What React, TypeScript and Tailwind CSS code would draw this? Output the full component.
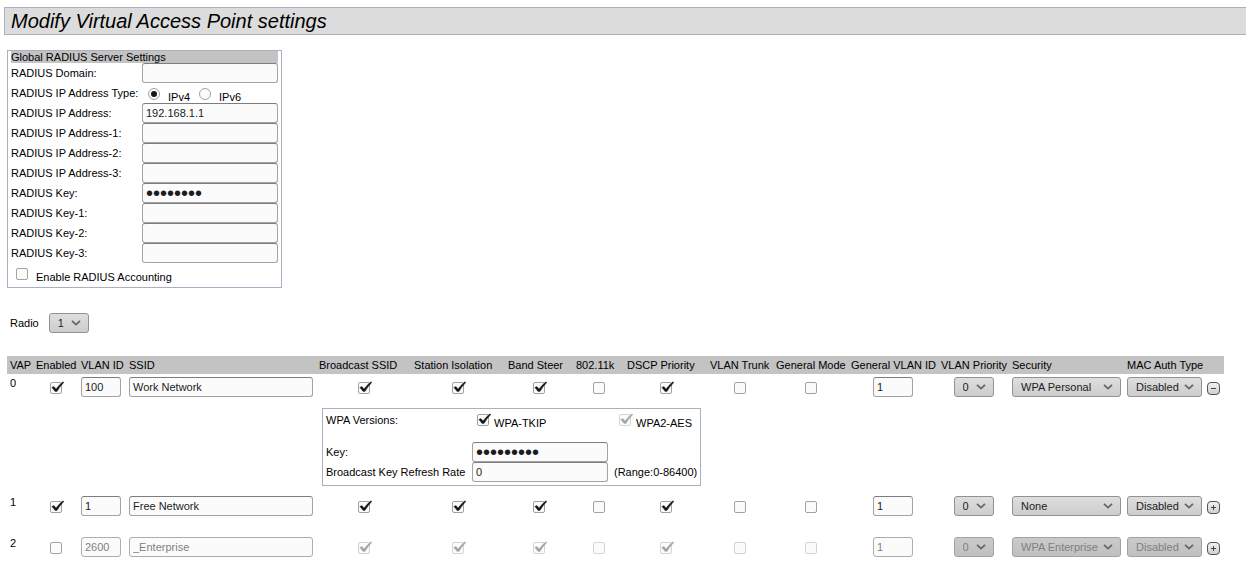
import { Fragment, useId, useState } from "react";
import type { InputHTMLAttributes, ReactNode } from "react";

const fieldClass =
  "block h-5 rounded-[3px] border border-[#a3a3a3] border-t-[#7d7d7d] bg-[#fbfbfb] px-[3px] leading-4 text-[#1c1c1c] outline-none disabled:border-[#adadad] disabled:text-[#808080]";

function TextField({ className = "", type = "text", ...rest }: InputHTMLAttributes<HTMLInputElement>) {
  const font = type === "password" ? "text-[20px]" : "text-[11px]";
  return <input type={type} className={`${fieldClass} ${font} ${className}`} {...rest} />;
}

function CheckBox(props: InputHTMLAttributes<HTMLInputElement>) {
  return (
    <span className="relative block size-3 shrink-0">
      <input
        type="checkbox"
        className="peer block size-3 appearance-none rounded-[2px] border border-[#a2a2a2] bg-[#fbfbfb] disabled:border-[#d4d4d4]"
        {...props}
      />
      <svg
        viewBox="0 0 14 13"
        className="pointer-events-none absolute -top-px left-0 hidden h-[13px] w-[14px] text-[#161616] peer-checked:block peer-disabled:text-[#a3a3a3]"
        aria-hidden="true"
      >
        <path d="M1.8 6.4 L4 5.6 L6 7.9 Q9 4 12.6 1 L14 1.3 Q10 5.4 7 10.4 L5 10.4 Q3.6 8.2 1.8 6.4 Z" fill="currentColor" stroke="currentColor" strokeWidth="0.4" />
      </svg>
    </span>
  );
}

function Select({
  label,
  value,
  options,
  width,
  disabled,
  id,
}: {
  label?: string;
  value: string;
  options: string[];
  width: string;
  disabled?: boolean;
  id?: string;
}) {
  return (
    <span className={`relative block ${width}`}>
      <select
        id={id}
        aria-label={label}
        defaultValue={value}
        disabled={disabled}
        className="block h-5 w-full appearance-none rounded-[3px] border border-[#929292] bg-linear-to-b from-[#dedede] to-[#cdcdcd] pl-2 text-[11px] leading-4 text-[#1c1c1c] outline-none disabled:border-[#a2a2a2] disabled:from-[#cacaca] disabled:to-[#c0c0c0] disabled:text-[#808080] disabled:opacity-100"
      >
        {options.map((o) => (
          <option key={o}>{o}</option>
        ))}
      </select>
      <svg
        viewBox="0 0 10 6"
        className="pointer-events-none absolute top-[7px] right-2 h-[6px] w-[10px]"
        fill="none"
        stroke="#666666"
        strokeWidth="1.8"
        aria-hidden="true"
      >
        <path d="M1 0.8 L5 4.6 L9 0.8" />
      </svg>
    </span>
  );
}

function RadiusRow({ label, value = "", type = "text" }: { label: string; value?: string; type?: string }) {
  const id = useId();
  return (
    <div className="flex h-5 items-center">
      <label htmlFor={id} className="w-[131px]">
        {label}
      </label>
      <TextField id={id} type={type} defaultValue={value} autoComplete="off" className="w-[136px]" />
    </div>
  );
}

function IpType({ name, checked }: { name: string; checked?: boolean }) {
  return (
    <label className="flex items-end gap-2 leading-3">
      <input
        type="radio"
        name="ip-type"
        defaultChecked={checked}
        className="mb-[3px] grid size-3 appearance-none place-items-center rounded-full border border-[#a2a2a2] bg-[#fbfbfb] before:size-[6px] before:rounded-full before:content-[''] checked:before:bg-[#161616]"
      />
      {name}
    </label>
  );
}

function RadiusPanel() {
  return (
    <section className="w-[275px] border border-[#aab0c0] px-[3px]">
      <h2 className="h-3 bg-[#c3c3c3] leading-3">Global RADIUS Server Settings</h2>
      <RadiusRow label="RADIUS Domain:" />
      <div className="flex h-5">
        <span className="w-[137px] leading-5">RADIUS IP Address Type:</span>
        <div className="flex items-end gap-[9px]">
          <IpType name="IPv4" checked />
          <IpType name="IPv6" />
        </div>
      </div>
      <RadiusRow label="RADIUS IP Address:" value="192.168.1.1" />
      <RadiusRow label="RADIUS IP Address-1:" />
      <RadiusRow label="RADIUS IP Address-2:" />
      <RadiusRow label="RADIUS IP Address-3:" />
      <RadiusRow label="RADIUS Key:" value="radius12" type="password" />
      <RadiusRow label="RADIUS Key-1:" type="password" />
      <RadiusRow label="RADIUS Key-2:" type="password" />
      <RadiusRow label="RADIUS Key-3:" type="password" />
      <label className="flex h-6 items-end gap-2 pb-1 pl-[5px] leading-3">
        <span className="mb-[3px]">
          <CheckBox />
        </span>
        Enable RADIUS Accounting
      </label>
    </section>
  );
}

function WpaVersion({ children, ...rest }: { children: ReactNode; defaultChecked?: boolean; disabled?: boolean }) {
  return (
    <label className="flex items-end gap-[5px] pb-[2px] pl-[5px] leading-3">
      <span className="mb-[3px]">
        <CheckBox {...rest} />
      </span>
      {children}
    </label>
  );
}

function WpaPanel() {
  return (
    <div className="grid w-max grid-cols-[146px_142px_auto] border border-[#aab0c0] px-[3px] pb-[3px]">
      <span className="leading-[22px]">WPA Versions:</span>
      <WpaVersion defaultChecked>WPA-TKIP</WpaVersion>
      <WpaVersion defaultChecked disabled>
        WPA2-AES
      </WpaVersion>
      <label htmlFor="wpa-key" className="mt-[11px] leading-5">
        Key:
      </label>
      <TextField id="wpa-key" type="password" defaultValue="workwork1" autoComplete="off" className="mt-[11px] w-[136px]" />
      <span />
      <label htmlFor="refresh-rate" className="leading-5">
        Broadcast Key Refresh Rate
      </label>
      <TextField id="refresh-rate" defaultValue="0" className="w-[136px]" />
      <span className="leading-5">(Range:0-86400)</span>
    </div>
  );
}

const columns = [
  { name: "VAP", width: "w-[26px]" },
  { name: "Enabled", width: "w-[45px]" },
  { name: "VLAN ID", width: "w-12" },
  { name: "SSID", width: "w-[190px]" },
  { name: "Broadcast SSID", width: "w-[95px]" },
  { name: "Station Isolation", width: "w-[94px]" },
  { name: "Band Steer", width: "w-[68px]" },
  { name: "802.11k", width: "w-[51px]" },
  { name: "DSCP Priority", width: "w-[83px]" },
  { name: "VLAN Trunk", width: "w-[66px]" },
  { name: "General Mode", width: "w-[75px]" },
  { name: "General VLAN ID", width: "w-[90px]" },
  { name: "VLAN Priority", width: "w-[71px]" },
  { name: "Security", width: "w-[115px]" },
  { name: "MAC Auth Type", width: "w-20" },
  { name: "", width: "w-5" },
];

const flagColumns: { name: string; on: boolean }[] = [
  { name: "Broadcast SSID", on: true },
  { name: "Station Isolation", on: true },
  { name: "Band Steer", on: true },
  { name: "802.11k", on: false },
  { name: "DSCP Priority", on: true },
  { name: "VLAN Trunk", on: false },
  { name: "General Mode", on: false },
];

const vaps = [
  { enabled: true, vlan: "100", ssid: "Work Network", security: "WPA Personal" },
  { enabled: true, vlan: "1", ssid: "Free Network", security: "None" },
  { enabled: false, vlan: "2600", ssid: "_Enterprise", security: "WPA Enterprise" },
];

function CheckCell({ label, checked, disabled }: { label: string; checked: boolean; disabled?: boolean }) {
  return (
    <td className="px-[3px]">
      <div className="flex justify-center pt-[2px]">
        <CheckBox aria-label={label} defaultChecked={checked} disabled={disabled} />
      </div>
    </td>
  );
}

function VapTable() {
  const [open, setOpen] = useState(0);
  return (
    <table className="w-[1217px] table-fixed border-collapse">
      <colgroup>
        {columns.map((c) => (
          <col key={c.name} className={c.width} />
        ))}
      </colgroup>
      <thead>
        <tr className="h-[18px] bg-[#c3c3c3]">
          {columns.map((c) => (
            <th key={c.name} className="px-[3px] text-left font-normal whitespace-nowrap">
              {c.name}
            </th>
          ))}
        </tr>
      </thead>
      <tbody>
        {vaps.map((v, i) => (
          <Fragment key={v.ssid}>
            <tr className="h-[26px]">
              <td className="px-[3px] pt-[3px] align-top">{i}</td>
              <CheckCell label={`VAP ${i} enabled`} checked={v.enabled} />
              <td className="px-[3px]">
                <TextField aria-label="VLAN ID" defaultValue={v.vlan} disabled={!v.enabled} className="w-10" />
              </td>
              <td className="px-[3px]">
                <TextField aria-label="SSID" defaultValue={v.ssid} disabled={!v.enabled} className="w-full" />
              </td>
              {flagColumns.map((f) => (
                <CheckCell key={f.name} label={f.name} checked={f.on} disabled={!v.enabled} />
              ))}
              <td className="px-[3px]">
                <TextField aria-label="General VLAN ID" defaultValue="1" disabled={!v.enabled} className="mx-auto w-10" />
              </td>
              <td className="px-[3px]">
                <Select
                  label="VLAN Priority"
                  value="0"
                  options={["0", "1", "2", "3", "4", "5", "6", "7"]}
                  width="mx-auto w-10"
                  disabled={!v.enabled}
                />
              </td>
              <td className="px-[3px]">
                <Select
                  label="Security"
                  value={v.security}
                  options={["None", "WPA Personal", "WPA Enterprise"]}
                  width="w-full"
                  disabled={!v.enabled}
                />
              </td>
              <td className="px-[3px]">
                <Select
                  label="MAC Auth Type"
                  value="Disabled"
                  options={["Disabled", "Local", "RADIUS"]}
                  width="w-[75px]"
                  disabled={!v.enabled}
                />
              </td>
              <td className="px-[3px]">
                <div className="pt-[2px]">
                  <button
                    type="button"
                    aria-label={open === i ? "Collapse" : "Expand"}
                    aria-expanded={open === i}
                    onClick={() => setOpen(open === i ? -1 : i)}
                    className="block size-[13px] rounded-[4px] border border-[#555555] bg-linear-to-b from-[#f2f2f2] to-[#cfcfcf]"
                  >
                    <svg viewBox="0 0 11 11" className="block size-[11px]" stroke="#444444" aria-hidden="true">
                      <path d={open === i ? "M3 5.5 H8" : "M3 5.5 H8 M5.5 3 V8"} />
                    </svg>
                  </button>
                </div>
              </td>
            </tr>
            <tr className="h-[15px]">
              <td colSpan={4} />
              <td colSpan={12} className={open === i ? "pt-2 pb-[7px] pl-[6px]" : ""}>
                {open === i && <WpaPanel />}
              </td>
            </tr>
          </Fragment>
        ))}
      </tbody>
    </table>
  );
}

export default function App() {
  return (
    <main className="overflow-x-clip bg-white pt-[7px] font-['Liberation_Sans',Arial,sans-serif] text-[11px] leading-[13px] text-black">
      <h1 className="ml-1 h-7 border border-r-0 border-[#aab0c0] bg-[#dcdcdc] pl-[6px] text-[20px] leading-[26px] italic">
        Modify Virtual Access Point settings
      </h1>
      <div className="pt-[15px] pl-[7px]">
        <RadiusPanel />
        <div className="flex items-center gap-[10px] pt-[25px] pb-[23px] pl-[3px]">
          <label htmlFor="radio-number">Radio</label>
          <Select id="radio-number" value="1" options={["1", "2"]} width="w-10" />
        </div>
        <VapTable />
      </div>
    </main>
  );
}
